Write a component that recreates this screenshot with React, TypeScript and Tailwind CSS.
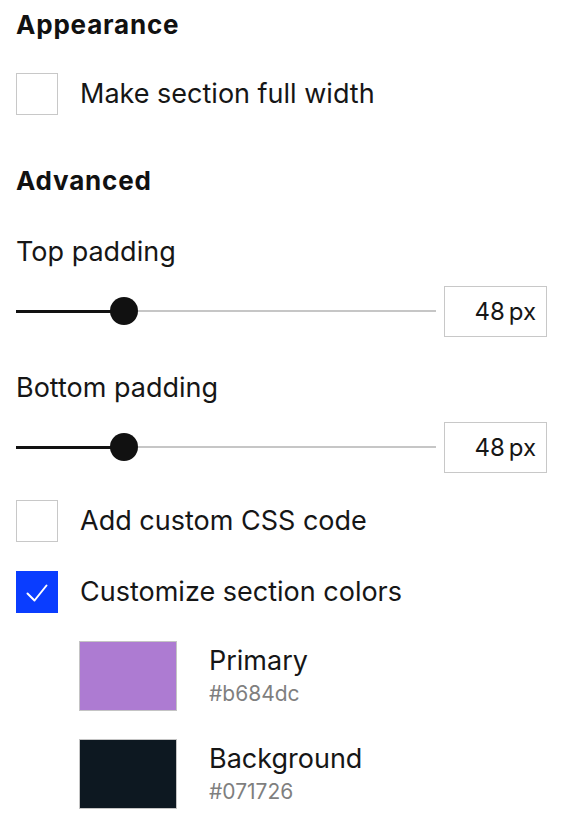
import { useState } from 'react'

type CheckboxRowProps = { label: string; checked: boolean; onToggle: () => void; className?: string }

function CheckboxRow({ label, checked, onToggle, className = '' }: CheckboxRowProps) {
  return (
    <label className={`flex items-center gap-[22px] cursor-pointer ${className}`} onClick={onToggle}>
      <span
        className={`flex h-[42px] w-[42px] shrink-0 items-center justify-center border ${
          checked ? 'border-[#0a3dff] bg-[#0a3dff]' : 'border-[#c8c8c8] bg-white'
        }`}
      >
        {checked && (
          <svg width="22" height="18" viewBox="0 0 22 18" fill="none" className="mt-[1px]">
            <path d="M1.5 9.5 L8.5 16.5 L20.5 1.5" stroke="white" strokeWidth="2" strokeLinecap="round" strokeLinejoin="round" />
          </svg>
        )}
      </span>
      <span className="text-[27px] leading-[32px] text-[#161616]">{label}</span>
    </label>
  )
}

function PaddingSlider({ label, value, className = '' }: { label: string; value: number; className?: string }) {
  // thumb sits at ~26% of the track for 48px
  const pct = (value / 186) * 100
  return (
    <div className={className}>
      <div className="text-[27px] leading-[32px] text-[#161616]">{label}</div>
      <div className="mt-[18px] flex items-center gap-2">
        <div className="relative h-[51px] flex-1">
          <div className="absolute left-0 right-0 top-[24px] h-[2px] bg-[#c6c6c6]" />
          <div className="absolute left-0 top-[23.5px] h-[3px] bg-[#111]" style={{ width: `${pct}%` }} />
          <div
            className="absolute top-[11px] h-[28px] w-[28px] -translate-x-1/2 rounded-full bg-[#111]"
            style={{ left: `${pct}%` }}
          />
        </div>
        <div className="flex h-[51px] w-[103px] items-center justify-end border border-[#c8c8c8] pr-[10px] text-[24px] text-[#161616]">
          <span>{value}</span>
          <span className="ml-[4px]">px</span>
        </div>
      </div>
    </div>
  )
}

function Swatch({ name, hex, fill, className = '' }: { name: string; hex: string; fill: string; className?: string }) {
  return (
    <div className={`ml-[63px] flex items-start gap-[32px] ${className}`}>
      <div className="h-[70px] w-[98px] shrink-0 border border-[#c4c4c4]" style={{ backgroundColor: fill }} />
      <div className="pt-[5px]">
        <div className="text-[27px] leading-[30px] text-[#161616]">{name}</div>
        <div className="mt-[6px] text-[21px] leading-[24px] text-[#7f7f7f]">{hex}</div>
      </div>
    </div>
  )
}

export default function App() {
  const [fullWidth, setFullWidth] = useState(false)
  const [customCss, setCustomCss] = useState(false)
  const [customColors, setCustomColors] = useState(true)

  return (
    <div className="min-h-screen bg-white pl-4 pr-[34px] pt-[10px] font-['Inter',sans-serif]">
      <h2 className="text-[26px] font-bold leading-[30px] tracking-[0.8px] text-[#111]">Appearance</h2>
      <CheckboxRow className="mt-[33px]" label="Make section full width" checked={fullWidth} onToggle={() => setFullWidth(!fullWidth)} />

      <h2 className="mt-[51px] text-[26px] font-bold leading-[30px] tracking-[0.8px] text-[#111]">Advanced</h2>
      <PaddingSlider className="mt-[40px]" label="Top padding" value={48} />
      <PaddingSlider className="mt-[35px]" label="Bottom padding" value={48} />

      <CheckboxRow className="mt-[27px]" label="Add custom CSS code" checked={customCss} onToggle={() => setCustomCss(!customCss)} />
      <CheckboxRow className="mt-[29px]" label="Customize section colors" checked={customColors} onToggle={() => setCustomColors(!customColors)} />

      {customColors && (
        <>
          <Swatch className="mt-[28px]" name="Primary" hex="#b684dc" fill="#ad7bd2" />
          <Swatch className="mt-[28px]" name="Background" hex="#071726" fill="#0d1821" />
        </>
      )}
    </div>
  )
}
